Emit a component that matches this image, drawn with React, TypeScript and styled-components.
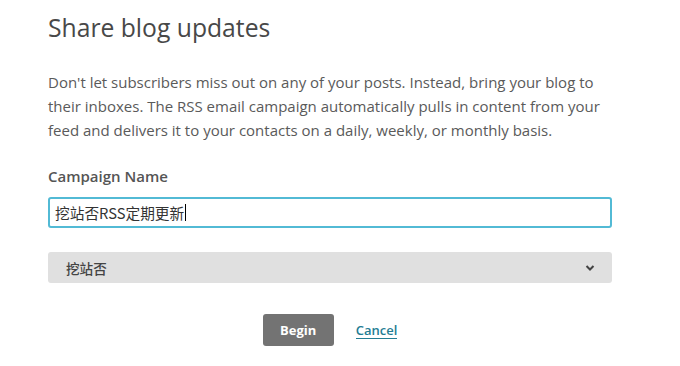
import React from "react";
import styled, { createGlobalStyle } from "styled-components";

const Global = createGlobalStyle`
  html, body { margin: 0; padding: 0; background: #fff; }
  body { font-family: "Open Sans", "Noto Sans CJK SC", sans-serif; }
  * { box-sizing: border-box; }
`;

const Page = styled.div`
  padding: 12px 0 0 48px;
  width: 680px;
`;

const Content = styled.div`
  width: 564px;
  display: flex;
  flex-direction: column;
`;

const Title = styled.h1`
  margin: 0;
  font-size: 24.7px;
  line-height: 32px;
  font-weight: 400;
  color: #484848;
`;

const Intro = styled.p`
  margin: 26px 0 0;
  font-size: 15px;
  line-height: 24px;
  color: #5a5a5a;
`;

const Label = styled.label`
  margin-top: 24px;
  font-size: 15px;
  line-height: 20px;
  font-weight: 600;
  color: #555;
`;

const Field = styled.div`
  margin-top: 11px;
  height: 31px;
  border: 2px solid #52bad5;
  border-radius: 3px;
  display: flex;
  align-items: center;
  padding: 0 5px;
  font-family: "Noto Sans CJK SC", sans-serif;
  font-size: 14.7px;
  color: #333;
`;

const Caret = styled.span`
  display: inline-block;
  width: 1px;
  height: 17px;
  background: #000;
  margin-left: 1px;
`;

const Select = styled.div`
  margin-top: 24px;
  height: 31px;
  background: #e0e0e0;
  border-radius: 3px;
  display: flex;
  align-items: center;
  justify-content: space-between;
  padding: 0 17px 0 18px;
  font-family: "Noto Sans CJK SC", sans-serif;
  font-size: 13.6px;
  font-weight: 500;
  color: #444;
`;

const Actions = styled.div`
  margin-top: 31px;
  display: flex;
  align-items: center;
  justify-content: center;
  gap: 22px;
`;

const Button = styled.button`
  height: 32px;
  width: 71px;
  border: none;
  border-radius: 3px;
  background: #737373;
  color: #fff;
  font-family: "Open Sans", sans-serif;
  font-weight: 700;
  font-size: 13px;
  padding: 0;
`;

const CancelLink = styled.a`
  color: #237c93;
  font-size: 13px;
  font-weight: 600;
  text-decoration: none;
  border-bottom: 1px solid #237c93;
  line-height: 16px;
`;

export default function App() {
  return (
    <>
      <Global />
      <Page>
        <Content>
          <Title>Share blog updates</Title>
          <Intro>
            Don't let subscribers miss out on any of your posts. Instead, bring your blog to
            their inboxes. The RSS email campaign automatically pulls in content from your
            feed and delivers it to your contacts on a daily, weekly, or monthly basis.
          </Intro>
          <Label>Campaign Name</Label>
          <Field>
            挖站否RSS定期更新
            <Caret />
          </Field>
          <Select>
            <span>挖站否</span>
            <svg width="10" height="8" viewBox="0 0 10 8">
              <path d="M1.5 2 L5 5.5 L8.5 2" fill="none" stroke="#444" strokeWidth="2" />
            </svg>
          </Select>
          <Actions>
            <Button>Begin</Button>
            <CancelLink href="#">Cancel</CancelLink>
          </Actions>
        </Content>
      </Page>
    </>
  );
}
